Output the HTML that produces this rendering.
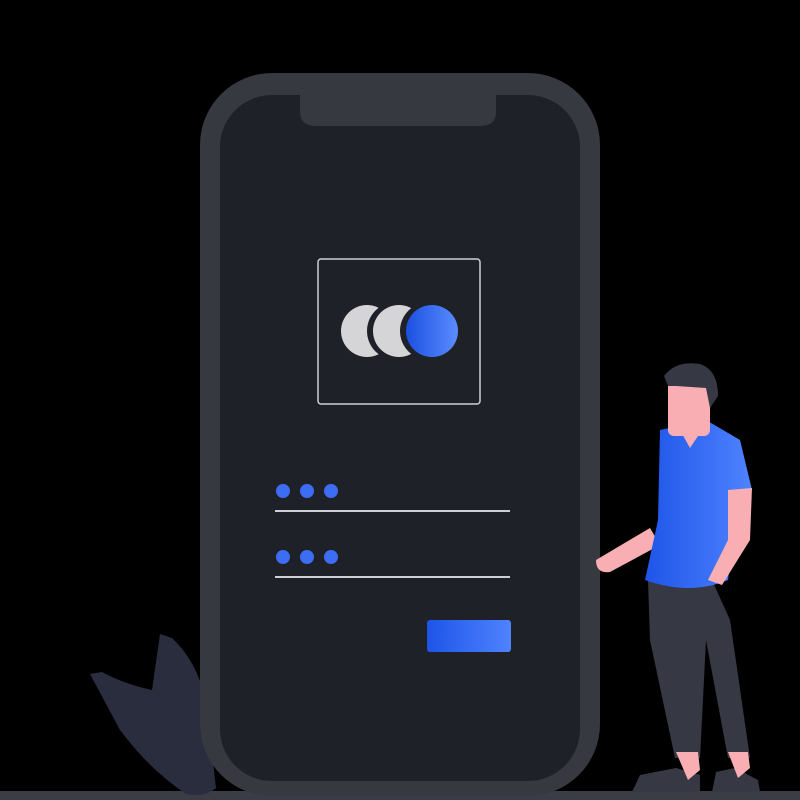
<!DOCTYPE html>
<html><head><style>html,body{margin:0;background:#000;width:800px;height:800px;overflow:hidden}</style></head>
<body>
<svg width="800" height="800" viewBox="0 0 800 800" xmlns="http://www.w3.org/2000/svg">
<defs>
<linearGradient id="b" x1="0" x2="1"><stop offset="0" stop-color="#1b50e0"/><stop offset="1" stop-color="#5b8cff"/></linearGradient>
<linearGradient id="s" x1="0" x2="1"><stop offset="0" stop-color="#1e55e8"/><stop offset="1" stop-color="#4f83ff"/></linearGradient>
</defs>
<rect x="0" y="791" width="800" height="9" fill="#3a3d46"/>
<path d="M90 674 L102 672 Q124 684 152 690 L160 634 L172 638 Q196 660 206 700 L216 788 Q204 798 186 794 Q150 770 120 730 Z" fill="#2a2d3e"/>
<rect x="200" y="73" width="400" height="723" rx="72" fill="#363940"/>
<rect x="220" y="95" width="360" height="686" rx="52" fill="#1f2129"/>
<path d="M300 95 H496 V112 Q496 126 480 126 H316 Q300 126 300 112 Z" fill="#363940"/>
<rect x="318" y="259" width="162" height="145" rx="3" fill="none" stroke="#cfd0d3" stroke-width="1.5"/>
<circle cx="367" cy="331" r="26" fill="#d5d5d7"/>
<circle cx="396" cy="331" r="29" fill="#1f2129"/>
<circle cx="399" cy="331" r="26" fill="#d5d5d7"/>
<circle cx="429" cy="331" r="29" fill="#1f2129"/>
<circle cx="432" cy="331" r="26" fill="url(#b)"/>
<g fill="#3d6cf5"><circle cx="283" cy="491" r="7"/><circle cx="307" cy="491" r="7"/><circle cx="331" cy="491" r="7"/>
<circle cx="283" cy="557" r="7"/><circle cx="307" cy="557" r="7"/><circle cx="331" cy="557" r="7"/></g>
<rect x="275" y="510" width="235" height="2" fill="#cfd0d3"/>
<rect x="275" y="576" width="235" height="2" fill="#cfd0d3"/>
<rect x="427" y="620" width="84" height="32" rx="3" fill="url(#s)"/>
<path d="M648 580 L712 580 L730 620 L750 758 L728 758 L706 640 L700 758 L675 758 L650 640 Z" fill="#363944"/>
<path d="M640 775 L676 768 L700 775 L700 792 L632 792 Z" fill="#363944"/>
<path d="M716 772 L735 768 L758 780 L760 792 L712 792 Z" fill="#363944"/>
<path d="M676 752 H698 L700 770 L688 780 Z" fill="#f9aeb4"/>
<path d="M728 752 H748 L750 768 L738 778 Z" fill="#f9aeb4"/>
<path d="M596 560 L650 528 L660 545 L610 572 Q596 574 596 560 Z" fill="#f9aeb4"/>
<path d="M660 430 L706 420 L740 440 L752 490 L738 495 L728 580 Q690 596 645 580 L658 520 Z" fill="url(#s)"/>
<path d="M728 490 L752 488 L750 540 L722 585 L708 580 L728 540 Z" fill="#f9aeb4"/>
<rect x="668" y="378" width="42" height="58" rx="6" fill="#f9aeb4"/>
<path d="M680 430 L706 424 L690 448 Z" fill="#f9aeb4"/>
<path d="M664 376 Q676 360 700 364 Q718 370 718 396 L710 408 L706 388 L676 386 L668 386 Z" fill="#363944"/>
</svg>
</body></html>
